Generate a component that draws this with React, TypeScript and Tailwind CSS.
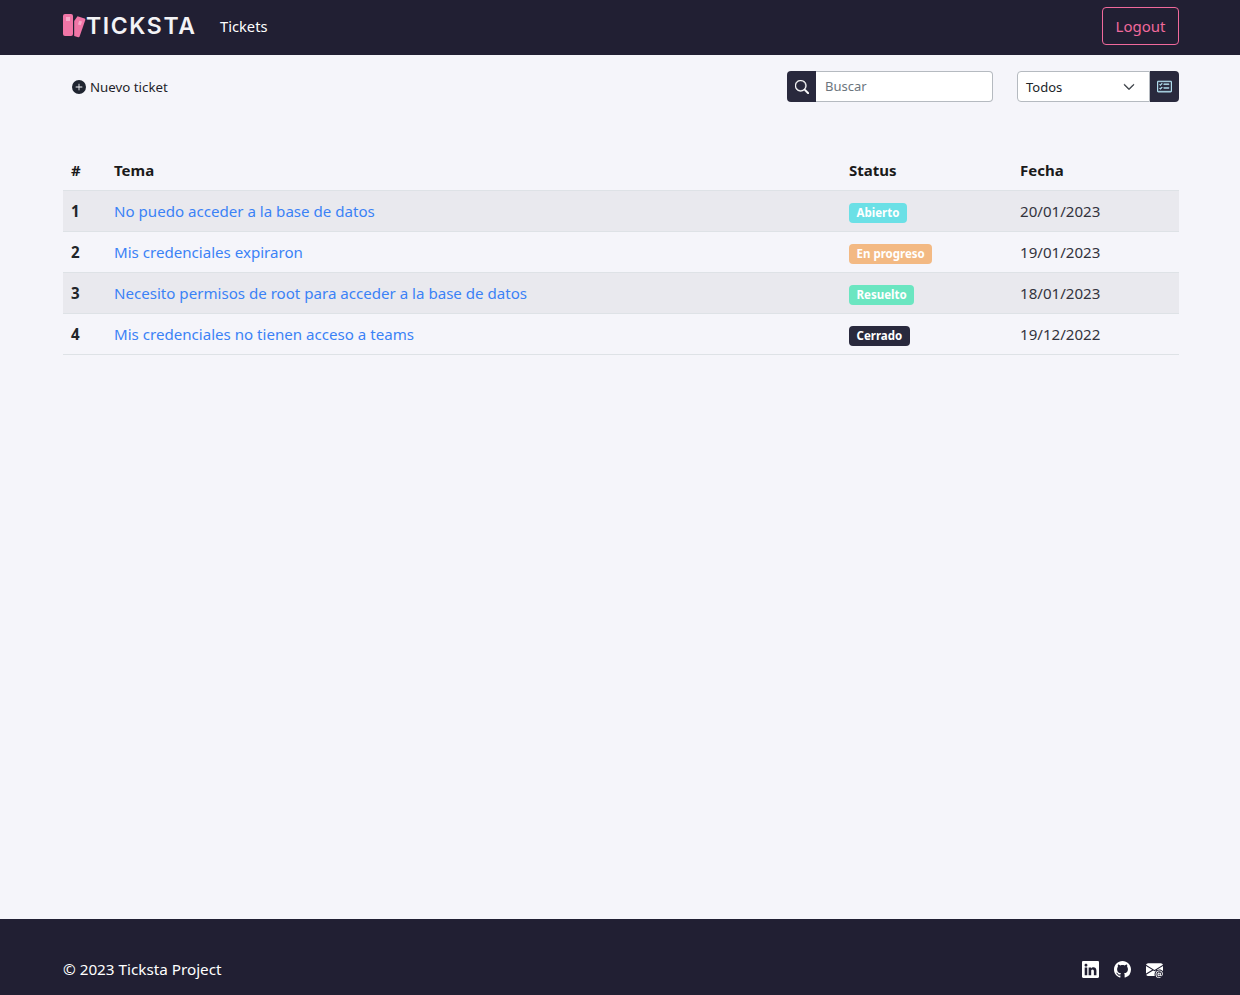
import { BsCardChecklist, BsChevronDown, BsEnvelopeAtFill, BsGithub, BsLinkedin, BsPlusCircleFill, BsSearch } from 'react-icons/bs';

const tickets = [
  { id: 1, subject: 'No puedo acceder a la base de datos', status: 'Abierto', badge: 'bg-[#6be0e6] text-white', date: '20/01/2023' },
  { id: 2, subject: 'Mis credenciales expiraron', status: 'En progreso', badge: 'bg-[#f3b983] text-white', date: '19/01/2023' },
  { id: 3, subject: 'Necesito permisos de root para acceder a la base de datos', status: 'Resuelto', badge: 'bg-[#6be6c1] text-white', date: '18/01/2023' },
  { id: 4, subject: 'Mis credenciales no tienen acceso a teams', status: 'Cerrado', badge: 'bg-[#29293d] text-white', date: '19/12/2022' },
];

const Logo = () => (
  <div className="flex items-center w-[132px] h-[24px]">
    <svg width="24" height="24" viewBox="0 0 24 24" className="shrink-0">
      <g fill="#f075a6">
        <rect x="0" y="0" width="10" height="22" rx="2" />
        <path d="M14.5 2.2 L21.6 4.6 Q22.6 5 22.3 6 L16.6 22.6 Q16.2 23.6 15.2 23.3 L11.2 22 L11.2 7 Z" />
      </g>
      <rect x="3" y="3" width="4" height="4" fill="#f7a9c8" />
      <rect x="15.5" y="7" width="3" height="4" fill="#f7a9c8" transform="rotate(18 17 9)" />
    </svg>
    <span className="font-['Inter',sans-serif] font-semibold text-[23px] leading-none tracking-[1.6px] text-[#f3f3f6] -ml-[1px]">TICKSTA</span>
  </div>
);

export default function App() {
  return (
    <div className="min-h-screen flex flex-col bg-[#f5f5fa] font-['Noto_Sans',sans-serif] text-[#212529]">
      {/* Navbar */}
      <nav className="h-[55px] bg-[#211f33] pl-[63px] pr-[61px] pb-[3px] flex items-center justify-between shrink-0">
        <div className="flex items-center">
          <Logo />
          <a className="ml-[25px] text-white text-[14.7px]">Tickets</a>
        </div>
        <button className="w-[77px] h-[38px] border border-[#f0699c] rounded-[4px] text-[#f0699c] text-[15px]">Logout</button>
      </nav>

      <main className="flex-1 pl-[63px] pr-[61px]">
        {/* Toolbar */}
        <div className="mt-[16px] h-[31px] flex items-center justify-between">
          <a className="ml-[9px] flex items-center gap-[4px] text-[13.3px] text-[#1f1f2b]">
            <BsPlusCircleFill className="text-[14px] text-[#1f2430]" />
            <span className="pt-[2px]">Nuevo ticket</span>
          </a>
          <div className="flex items-center">
            <div className="flex h-[31px] w-[206px]">
              <span className="w-[29px] flex items-center justify-center bg-[#29293d] text-white rounded-l-[4px]">
                <BsSearch className="text-[14px] stroke-[0.5px]" />
              </span>
              <input
                placeholder="Buscar"
                className="flex-1 min-w-0 bg-white border border-[#b5bac0] border-l-0 rounded-r-[4px] pl-[9px] pr-[8px] pt-[1px] text-[13px] placeholder:text-[#6c757d] outline-none"
              />
            </div>
            <div className="flex h-[31px] w-[162px] ml-[24px]">
              <button className="flex-1 flex items-center justify-between bg-white border border-[#b5bac0] rounded-l-[4px] pl-[8px] pr-[14px] text-[13px]">
                <span className="pt-[2px]">Todos</span>
                <BsChevronDown className="text-[12px] text-[#343a40] stroke-[1px]" />
              </button>
              <span className="w-[29px] flex items-center justify-center bg-[#29293d] text-[#b6e3f4] rounded-r-[4px]">
                <BsCardChecklist className="text-[15px] stroke-[0.5px]" />
              </span>
            </div>
          </div>
        </div>

        {/* Tickets table */}
        <table className="mt-[48px] w-full table-fixed border-collapse text-[15.1px]">
          <colgroup>
            <col className="w-[43px]" />
            <col className="w-[735px]" />
            <col className="w-[171px]" />
            <col className="w-[167px]" />
          </colgroup>
          <thead>
            <tr className="h-[40px] border-b border-[#dee2e6] text-left text-[#1a1a1a] text-[15px]">
              <th className="px-2 font-bold">#</th>
              <th className="px-2 font-bold">Tema</th>
              <th className="px-2 font-bold">Status</th>
              <th className="px-2 font-bold">Fecha</th>
            </tr>
          </thead>
          <tbody>
            {tickets.map((t, i) => (
              <tr key={t.id} className={`h-[41px] border-b border-[#dee2e6] ${i % 2 === 0 ? 'bg-[#e9e9ee]' : ''}`}>
                <td className="px-2 pt-[2px] font-bold">{t.id}</td>
                <td className="px-2 pt-[2px] text-[#3b82f6]">{t.subject}</td>
                <td className="px-2 pt-[2px]">
                  <span className={`inline-block h-[20px] leading-[20px] px-[7.5px] rounded-[4px] text-[11.5px] font-bold align-middle ${t.badge}`}>{t.status}</span>
                </td>
                <td className="px-2 pt-[2px] text-[#33333d]">{t.date}</td>
              </tr>
            ))}
          </tbody>
        </table>
      </main>

      {/* Footer */}
      <footer className="h-[76px] bg-[#211f33] shrink-0 pl-[63px] pr-[61px] flex items-end justify-between pb-[15px] text-white">
        <span className="text-[15.25px] leading-[22px]">© 2023 Ticksta Project</span>
        <div className="flex items-center gap-[15px] mr-[16px] mb-[2px]">
          <BsLinkedin className="text-[17px]" />
          <BsGithub className="text-[17px]" />
          <BsEnvelopeAtFill className="text-[17px]" />
        </div>
      </footer>
    </div>
  );
}
